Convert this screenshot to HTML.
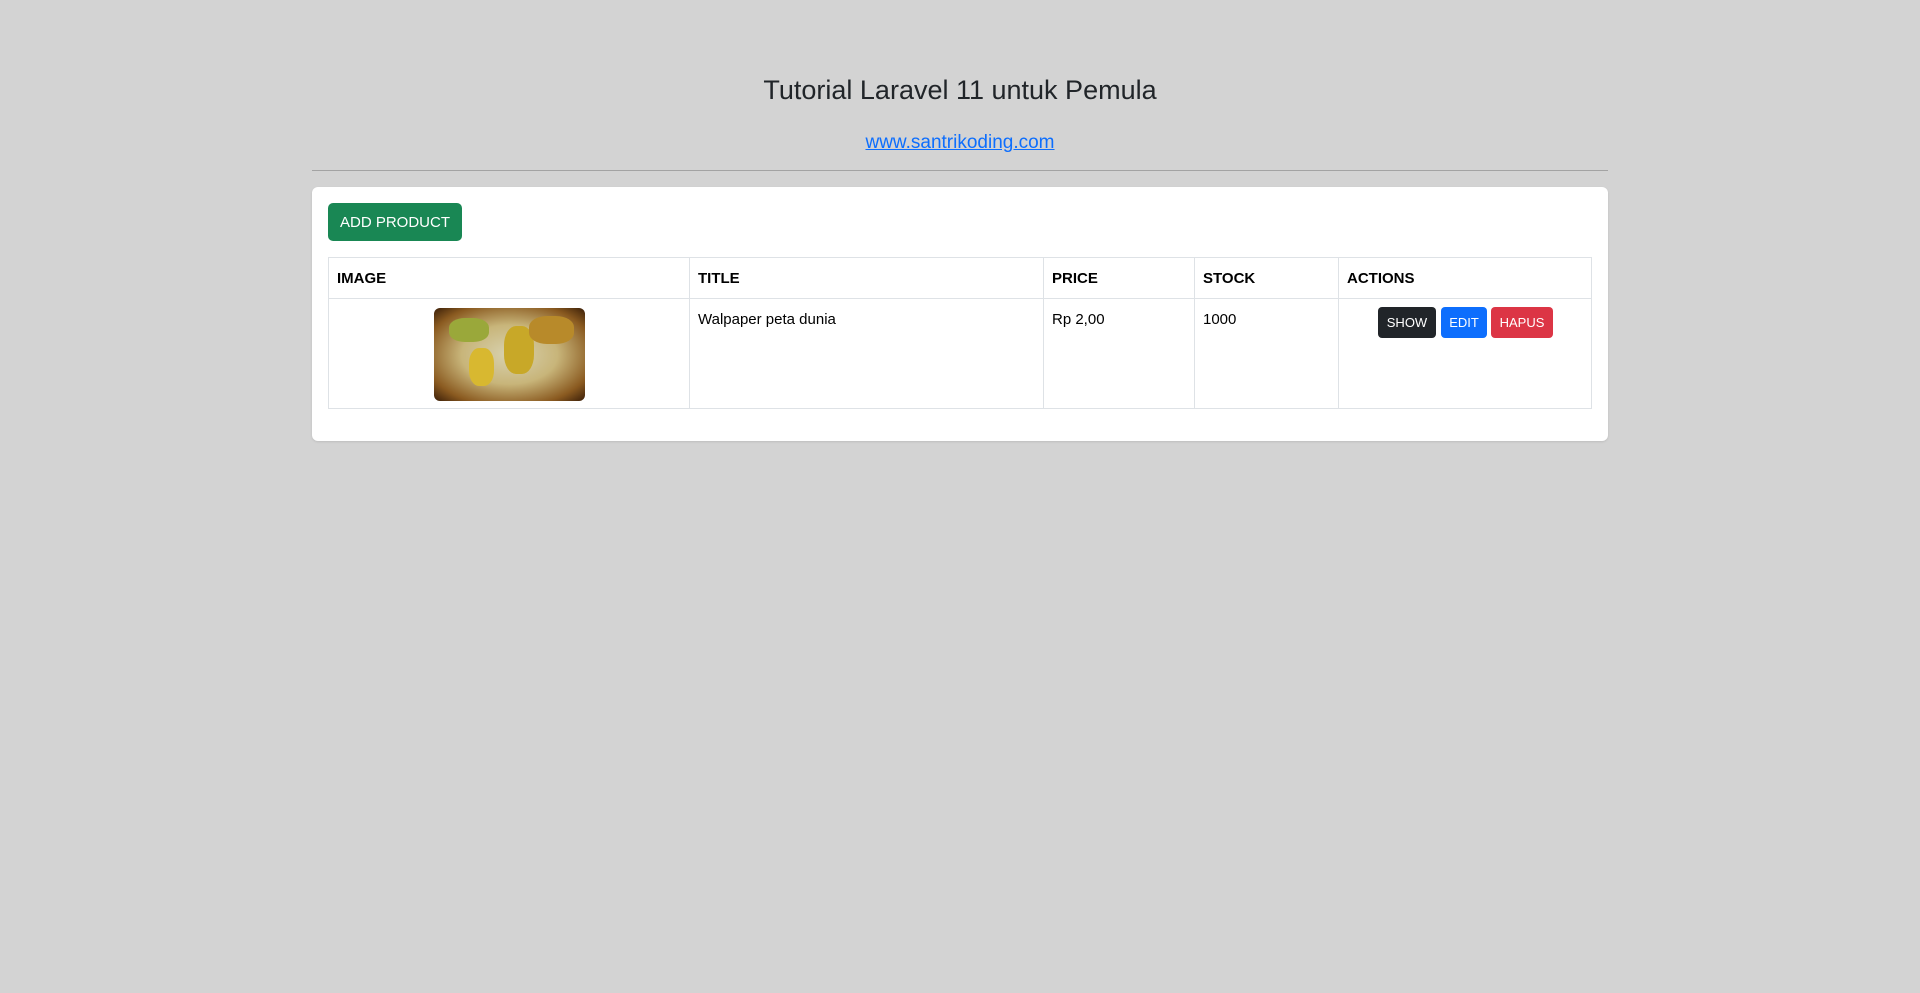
<!DOCTYPE html>
<html><head><meta charset="utf-8"><style>
*{box-sizing:border-box;margin:0;padding:0}
body{width:1920px;height:993px;background:#d3d3d3;font-family:"Liberation Sans",sans-serif;color:#212529;position:relative;overflow:hidden}
.a{position:absolute}
h3{position:absolute;left:0;width:1920px;top:73px;text-align:center;font-weight:400;font-size:27px;line-height:34px}
.link{position:absolute;left:0;width:1920px;top:131px;text-align:center;font-size:19px;line-height:24px}
.link a{color:#0d6efd;text-decoration:underline}
hr{position:absolute;left:312px;width:1296px;top:170px;border:0;border-top:1px solid #a3a3a3}
.card{left:312px;top:187px;width:1296px;height:254px;background:#fff;border-radius:6px;box-shadow:0 1px 2px rgba(0,0,0,.1)}
.btn{position:absolute;color:#fff;display:flex;align-items:center;justify-content:center;border-radius:4px;white-space:nowrap}
table{position:absolute;left:328px;top:257px;width:1264px;border-collapse:collapse;table-layout:fixed;font-size:15px;color:#000}
td,th{border:1px solid #dee2e6;padding:0 8px;text-align:left;vertical-align:top}
th{height:41px;vertical-align:middle;font-weight:700}
td{height:110px;padding-top:12px}
.map{width:151px;height:93px;border-radius:6px;background:radial-gradient(ellipse at 50% 50%,#d8d2b0 0%,#c8b57a 45%,#8a5a20 80%,#3a1e08 100%);position:relative;margin:0 auto;margin-top:-3px;overflow:hidden}
.map i{position:absolute;border-radius:40%}
</style></head><body>
<h3>Tutorial Laravel 11 untuk Pemula</h3>
<div class="link"><a>www.santrikoding.com</a></div>
<hr>
<div class="a card"></div>
<div class="btn" style="left:328px;top:203px;width:134px;height:38px;background:#198754;border-radius:5px;font-size:15px">ADD PRODUCT</div>
<table>
<colgroup><col style="width:361px"><col style="width:354px"><col style="width:151px"><col style="width:144px"><col></colgroup>
<tr><th>IMAGE</th><th>TITLE</th><th>PRICE</th><th>STOCK</th><th>ACTIONS</th></tr>
<tr><td><div class="map"><i style="left:15px;top:10px;width:40px;height:24px;background:#9aa83a"></i><i style="left:35px;top:40px;width:25px;height:38px;background:#d8b830"></i><i style="left:70px;top:18px;width:30px;height:48px;background:#c8a828"></i><i style="left:95px;top:8px;width:45px;height:28px;background:#b88a2a"></i></div></td><td>Walpaper peta dunia</td><td>Rp 2,00</td><td>1000</td><td></td></tr>
</table>
<div class="btn" style="left:1378px;top:307px;width:58px;height:31px;background:#212529;font-size:13px">SHOW</div>
<div class="btn" style="left:1441px;top:307px;width:46px;height:31px;background:#0d6efd;font-size:13px">EDIT</div>
<div class="btn" style="left:1491px;top:307px;width:62px;height:31px;background:#dc3545;font-size:13px">HAPUS</div>
</body></html>
